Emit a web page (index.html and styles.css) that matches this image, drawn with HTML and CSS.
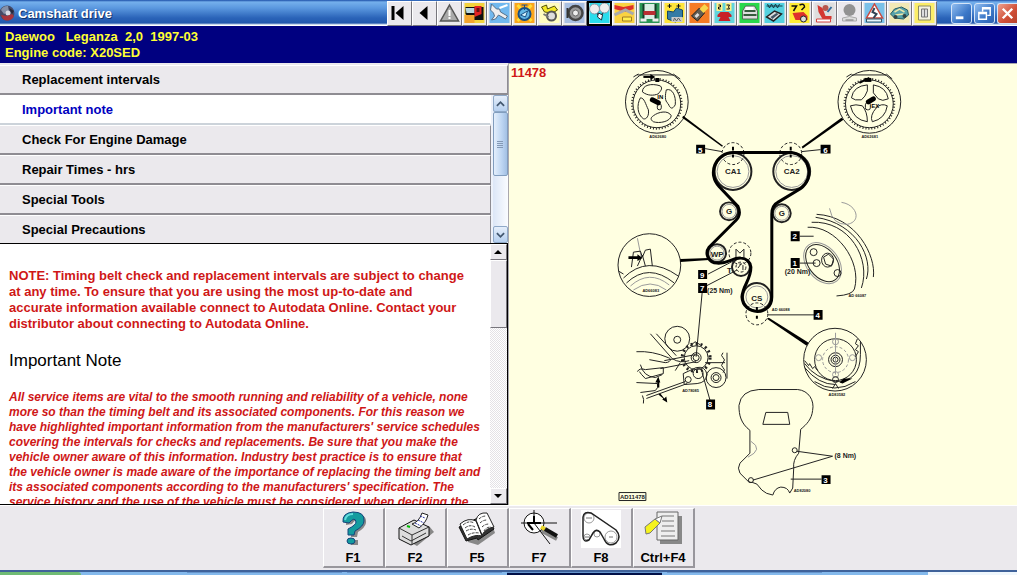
FILE: index.html
```html
<!DOCTYPE html>
<html lang="en">
<head>
<meta charset="utf-8">
<title>Camshaft drive</title>
<link rel="stylesheet" href="styles.css">
</head>
<body>
<div class="app">
  <header class="titlebar">
    <svg class="app-icon" viewBox="0 0 15 16" aria-hidden="true"><circle cx="7" cy="8" r="7.500" fill="#454a66"/><path d="M1 5a7 7 0 0 1 7-4l1 6-5 2z" fill="#8590a8"/><circle cx="8" cy="8" r="2.500" fill="#d9dbe4"/><path d="M1 10l6 1 5-2 2 2a7 7 0 0 1-11 3z" fill="#a8343c"/><path d="M9 3l5 3-2 3z" fill="#27283a"/></svg>
    <h1 class="window-title">Camshaft drive</h1>
    <nav class="tools" aria-label="Modules">
      <button class="tool" aria-label="First"><svg viewBox="0 0 20 20"><path d="M2 3h3v14H2zM14 3v14L6 10z"/></svg></button>
      <button class="tool" aria-label="Previous"><svg viewBox="0 0 20 20"><path d="M13 3v14L5 10z"/></svg></button>
      <button class="tool" aria-label="Warnings"><svg viewBox="0 0 20 20"><path d="M10 2l9 16H1z" fill="#aaa" stroke="#555" stroke-width="1.500"/><path d="M9 7h2v6H9zM9 14h2v2H9z" fill="#fff"/></svg></button>
      <button class="tool" aria-label="Vehicle"><svg viewBox="0 0 20 20"><path fill="#f3d33d" d="M0 0h20v20H0z"/><path d="M1 4h18v13H7l-6-6z" fill="#111"/><path d="M1 5h9v5H2z" fill="#b8d8e0"/><path d="M10 3h7v8l-7 3z" fill="#e32222"/><path d="M0 12h10v8H0z" fill="#f3a52e"/><path d="M12 5h3v4h-3z" fill="#611"/></svg></button>
      <button class="tool" aria-label="Service"><svg viewBox="0 0 20 20"><path fill="#70b8ee" d="M0 0h20v20H0z"/><path d="M2 1l5 5 3 0 1 3 7 4-2 3-7-4-3 4-4 1 3-4-1-3-3-3z" fill="#eee" stroke="#56718a"/><path d="M10 5l8-3" stroke="#fff" stroke-width="2"/></svg></button>
      <button class="tool" aria-label="Timing"><svg viewBox="0 0 20 20"><path fill="#fba51c" d="M0 0h20v20H0z"/><path d="M3 2l14 16M17 2L3 18" stroke="#ffdd37" stroke-width="3"/><circle cx="10" cy="11" r="6" fill="#63b6e4" stroke="#184f84" stroke-width="2"/><path d="M10 2v5M7 2h6M6 12l7-4-2 6z" stroke="#184f84" fill="#d8f4ff"/></svg></button>
      <button class="tool" aria-label="Timing belts"><svg viewBox="0 0 20 20"><path fill="#fffcc0" d="M0 0h20v20H0z"/><path d="M2 4l5-2 1 4 7-3 3 4-5 3-8-1z" fill="#f5ea25" stroke="#53500b"/><circle cx="12" cy="13" r="4.500" fill="#ddd" stroke="#555" stroke-width="2"/><path d="M4 11l5 3" stroke="#777" stroke-width="2"/></svg></button>
      <button class="tool" aria-label="Tyres"><svg viewBox="0 0 20 20"><path fill="#aac0e2" d="M0 0h20v20H0z"/><circle cx="11" cy="10" r="7" fill="#999" stroke="#444" stroke-width="2.500"/><circle cx="11" cy="10" r="3" fill="#eee" stroke="#666"/><path d="M3 5v10" stroke="#333" stroke-width="2"/></svg></button>
      <button class="tool selected" aria-label="Camshaft drive"><svg viewBox="0 0 20 20"><path fill="#29dded" d="M0 0h20v20H0z"/><path d="M4 5l7 10 4-9" stroke="#16424c" fill="none" stroke-width="1.500"/><circle cx="5" cy="6" r="5" fill="#eee" stroke="#89a"/><circle cx="15" cy="5" r="5" fill="#eee" stroke="#89a"/><path d="M9 10l4 2-1 5-4-3z" fill="#fff" stroke="#234"/></svg></button>
      <button class="tool" aria-label="Suspension"><svg viewBox="0 0 20 20"><path fill="#fad342" d="M0 0h20v20H0z"/><path d="M0 2l9 2 10-2v4l-8 3-11-3z" fill="#dd2f2a"/><path d="M0 12l11-5 8 4" stroke="#aaa" fill="none" stroke-width="3"/><path d="M8 14h9v4H8z" fill="#ffee50" stroke="#a07c28"/></svg></button>
      <button class="tool" aria-label="Lifting"><svg viewBox="0 0 20 20"><path fill="#2a9554" d="M0 0h20v20H0z"/><path d="M4 1h12v15H4z" fill="#d8eee3"/><path d="M4 1v17M16 1v17" stroke="#123d28" stroke-width="2"/><path d="M4 8h12v4H4z" fill="#b92f32"/><path d="M1 17h6M13 17h6" stroke="#eee" stroke-width="3"/></svg></button>
      <button class="tool" aria-label="Engine management"><svg viewBox="0 0 20 20"><path fill="#ffe53b" d="M0 0h20v20H0z"/><path d="M3 8l6 1 3-4 6 2v7l-7 5-8-3z" fill="#367ca5" stroke="#174561"/><path d="M5 1v4M3 3h4M14 1v4M12 3h4" stroke="#111"/><path d="M7 14h11v5H7z" fill="#ccc"/><path d="M9 18l1-3 2 3 2-3 2 3" fill="none" stroke="#666"/></svg></button>
      <button class="tool" aria-label="Connectors"><svg viewBox="0 0 20 20"><path fill="#f47b24" d="M0 0h20v20H0z"/><path d="M2 13l8-8 5 5-7 8z" fill="#625d52" stroke="#222"/><path d="M10 6l5-5 4 4-5 5z" fill="#f8d64b"/><path d="M5 13l3-3 2 2-3 3z" fill="#ddd"/></svg></button>
      <button class="tool" aria-label="Fault codes"><svg viewBox="0 0 20 20"><path fill="#62d5dc" d="M0 0h20v20H0z"/><path fill="#fff38a" d="M2 0h6v8H2zM11 0h6v8h-6z"/><path d="M4 2h2v2H4v2h2M12 2h3l-1 2 1 2h-3" stroke="#111" fill="none"/><path d="M3 12l3-3h8l3 3v2h-3l2 4H4l2-4H3z" fill="#c82026"/></svg></button>
      <button class="tool" aria-label="Key programming"><svg viewBox="0 0 20 20"><path fill="#28d84a" d="M0 0h20v20H0z"/><path d="M3 8l3-5h9l3 5v8H3z" fill="#ddd" stroke="#546d59"/><path d="M5 8h11M4 12h13" stroke="#345a3b" stroke-width="2"/><path d="M6 4h8v3H6z" fill="#fff"/></svg></button>
      <button class="tool" aria-label="Air conditioning"><svg viewBox="0 0 20 20"><path fill="#54d1df" d="M0 0h20v20H0z"/><path d="M2 3h16M3 1l2 4 2-4 2 4 2-4 2 4 2-4" stroke="#173b46" fill="none"/><path d="M2 14l8-6 7 3-8 7z" fill="#ddd" stroke="#222" stroke-width="1.500"/><path d="M6 14l6-4 2 1-6 5z" fill="#456"/></svg></button>
      <button class="tool" aria-label="Fault finding"><svg viewBox="0 0 20 20"><path fill="#ffec34" d="M0 0h20v20H0z"/><path d="M2 3h5L4 8M10 2q5-2 5 2l-3 3" stroke="#111" fill="none" stroke-width="1.500"/><path d="M3 10l11-1 4 4v4H6z" fill="#de302c"/><circle cx="14" cy="16" r="3" fill="#ddd" stroke="#222"/></svg></button>
      <button class="tool" aria-label="Airbags"><svg viewBox="0 0 20 20"><path fill="#dedede" d="M0 0h20v20H0z"/><path d="M3 2l5 3 3 8h6v3H8L4 9z" fill="#d43732"/><circle cx="11" cy="5" r="3" fill="#b7584d"/><path d="M13 9l4-5" stroke="#346d9d" stroke-width="2"/><path d="M2 16h14v3H2z" fill="#fff" stroke="#d54340"/></svg></button>
      <button class="tool" aria-label="Anti-lock brakes"><svg viewBox="0 0 20 20"><circle cx="10" cy="7" r="6" fill="#929292"/><path d="M3 15q7-3 14 0v3H3z" fill="#ddd" stroke="#aaa"/><path d="M6 17h8" stroke="#777"/></svg></button>
      <button class="tool" aria-label="Advice"><svg viewBox="0 0 20 20"><path fill="#7ac1e8" d="M0 0h20v20H0z"/><path d="M10 1l8 14H2z" fill="#fff" stroke="#cb493e" stroke-width="1.500"/><path d="M10 5l-2 4 4 2-3 4" stroke="#345" fill="none" stroke-width="2"/><path d="M2 16h15v3H2z" fill="#e5f7fb" stroke="#356"/></svg></button>
      <button class="tool" aria-label="Electrical"><svg viewBox="0 0 20 20"><path fill="#f1e9b6" d="M0 0h20v20H0z"/><path d="M1 11l4-5 7-2 6 3 1 5-5 4-9-1z" fill="#56a2aa" stroke="#295d64"/><path d="M5 9l5-3 5 3M6 12l8-1" stroke="#ece7aa" fill="none" stroke-width="1.500"/><circle cx="6" cy="14" r="2" fill="#344"/><circle cx="15" cy="13" r="2" fill="#344"/></svg></button>
      <button class="tool" aria-label="Fuses"><svg viewBox="0 0 20 20"><path fill="#fbed68" d="M0 0h20v20H0z"/><path d="M4 3h12v14H4z" fill="#f4f2df" stroke="#8d8b66"/><path d="M7 6h6v8H7zM10 6v8" stroke="#777" fill="#ddd"/></svg></button>
    </nav>
    <div class="window-controls">
      <button class="winbtn" aria-label="Minimise"><svg viewBox="0 0 20 20"><path fill="#fff" d="M4 13h8v3H4z"/></svg></button>
      <button class="winbtn" aria-label="Restore"><svg viewBox="0 0 20 20"><path d="M8 8V4h8v8h-3M4 9h8v7H4zM4 10h8M8 5h8" stroke="#fff" fill="none" stroke-width="1.500"/></svg></button>
      <button class="winbtn close" aria-label="Close"><svg viewBox="0 0 20 20"><path d="M5 5l10 10M15 5L5 15" stroke="#fff" stroke-width="2.500"/></svg></button>
    </div>
  </header>

  <section class="vehicle">
    <p>Daewoo &nbsp; Leganza &nbsp;2,0 &nbsp;1997-03</p>
    <p>Engine code: X20SED</p>
  </section>

  <main class="content">
    <section class="left">
      <button class="item">Replacement intervals</button>
      <div class="sections">
        <div class="section-list">
          <button class="item active">Important note</button>
          <button class="item">Check For Engine Damage</button>
          <button class="item">Repair Times - hrs</button>
          <button class="item">Special Tools</button>
          <button class="item">Special Precautions</button>
        </div>
        <div class="xp-scroll">
          <button class="xp-arrow" aria-label="Scroll sections up"><svg viewBox="0 0 10 10"><path d="M1 7l4-4 4 4" fill="none" stroke="#42576f" stroke-width="2"/></svg></button>
          <div class="xp-thumb"><svg viewBox="0 0 8 9"><path d="M1 1.500h6M1 3.500h6M1 5.500h6M1 7.500h6" stroke="#8499b5"/></svg></div>
          <button class="xp-arrow xp-down" aria-label="Scroll sections down"><svg viewBox="0 0 10 10"><path d="M1 3l4 4 4-4" fill="none" stroke="#42576f" stroke-width="2"/></svg></button>
        </div>
      </div>
      <div class="reader">
        <article class="article">
          <p class="notice">NOTE: Timing belt check and replacement intervals are subject to change<br>at any time. To ensure that you are using the most up-to-date and<br>accurate information available connect to Autodata Online. Contact your<br>distributor about connecting to Autodata Online.</p>
          <h2>Important Note</h2>
          <p class="advice">All service items are vital to the smooth running and reliability of a vehicle, none<br>more so than the timing belt and its associated components. For this reason we<br>have highlighted important information from the manufacturers' service schedules<br>covering the intervals for checks and replacements. Be sure that you make the<br>vehicle owner aware of this information. Industry best practice is to ensure that<br>the vehicle owner is made aware of the importance of replacing the timing belt and<br>its associated components according to the manufacturers' specification. The<br>service history and the use of the vehicle must be considered when deciding the</p>
        </article>
        <div class="scroll">
          <button class="arrow" aria-label="Scroll text up"><svg viewBox="0 0 8 8"><path d="M0 6h8L4 2z"/></svg></button>
          <div class="thumb"></div>
          <button class="arrow arrow-down" aria-label="Scroll text down"><svg viewBox="0 0 8 8"><path d="M0 2h8L4 6z"/></svg></button>
        </div>
      </div>
    </section>

    <section class="diagram">
      <svg class="drawing" viewBox="509 64 508 443" preserveAspectRatio="xMinYMin meet" role="img" aria-label="Timing belt layout">
        <text x="511" y="77" class="number">11478</text>

        <!-- Intake sprocket detail -->
        <g class="line">
          <circle cx="657.500" cy="102" r="31.500"/>
          <circle cx="657.500" cy="104" r="24"/>
          <circle cx="657.500" cy="104" r="25" class="teeth"/>
          <path d="M638 75h36M634 77l5-3M674 74l7 5"/>
          <path d="M643 92c0-7 9-9 18-6 3 3 0 5-2 8-5 2-11 2-16-2zM667 90c6-2 10 6 9 15-3 5-5 4-7-1-4-3-3-9-2-14zM641 98c4 0 5 6 8 12 1 6-2 10-5 9-6-4-7-14-3-21zM654 116c5-4 15-6 18 0-1 6-12 8-18 6-3-2-3-4 0-6z"/>
          <rect x="658" y="104" width="4" height="6" rx="2"/>
        </g>
        <path class="bold4" d="M653 100l6 3"/><path class="thick" d="M644 77h10"/><path d="M651 74l5 3-5 3zM656 78h4v4h-4z"/>
        <path d="M684 116l40 30-1 1-40-29z"/>
        <text x="658" y="99" class="tiny6">IN</text><text x="650" y="138" class="tiny">AD62680</text>

        <!-- Exhaust sprocket detail -->
        <g class="line">
          <circle cx="871" cy="102" r="31.500"/>
          <circle cx="871" cy="104" r="24"/>
          <circle cx="871" cy="104" r="25" class="teeth"/>
          <path d="M853 75h35M848 77l5-3M888 74l6 5"/>
          <path d="M853 98q2-12 16-13v6q-2 6-6 9-7 1-10-2zM875 85q13 2 15 14-6 3-10 0l-5-6zM852 106q5-2 12 0 5 6 5 16-14-2-17-16zM889 106q-2 13-15 16-3-6 4-14 5-5 11-2z"/>
          <rect x="867" y="103" width="5" height="7" rx="2"/>
        </g>
        <path class="bold4" d="M870 102l5-3"/><path class="thick" d="M861 83l10-5"/><path d="M866 78h7v4h-7z"/>
        <path d="M843 118l-40 29 1 2 41-29z"/>
        <text x="873" y="108" class="tiny6">EX</text><text x="863" y="138" class="tiny">AD62681</text>

        <!-- Pulleys -->
        <g class="line">
          <g class="rim"><circle cx="734" cy="172" r="18.500"/><circle cx="793" cy="172" r="18.500"/><circle cx="730" cy="212" r="9"/><circle cx="783" cy="214" r="9"/><circle cx="718" cy="254" r="9"/><circle cx="742" cy="268" r="9"/><circle cx="758" cy="298" r="14"/></g>
          <g class="faint"><circle cx="734" cy="172" r="16"/><circle cx="793" cy="172" r="16"/><circle cx="730" cy="212" r="7"/><circle cx="783" cy="214" r="7"/><circle cx="718" cy="254" r="7"/><circle cx="758" cy="298" r="11"/></g>
          <g class="dashed"><circle cx="734" cy="154" r="11"/><circle cx="792" cy="154" r="11"/><circle cx="741" cy="254" r="11"/><circle cx="758" cy="315" r="11"/><circle cx="742" cy="268" r="5"/></g>
          <path d="M737 258v-8l4 4 4-4v8M739 269l3-4M744 266v5"/>
        </g>
        <path class="belt" d="M734 153H793A20 20 0 0 1 802 189L779 203Q773 206 773 215V298C773 318 744 317 743 298C744 286 752 281 752 268A10 10 0 0 0 742 259C734 258 729 265 718 264A10 10 0 0 1 710 248L736 222Q743 216 739 207L720 187A20 20 0 0 1 734 153Z"/>
        <path d="M733 147h2v4h-2zM733 155h2v3h-2zM791 147h2v4h-2zM791 155h2v3h-2zM757 308h2v4h-2zM757 317h2v3h-2z"/>
        <text x="734" y="175" class="label mid">CA1</text><text x="793" y="175" class="label mid">CA2</text>
        <text x="730" y="215" class="label mid">G</text><text x="783" y="217" class="label mid">G</text>
        <text x="718" y="258" class="label mid">WP</text><text x="728" y="274" class="label">T</text><text x="758" y="302" class="label mid">CS</text>

        <!-- Water pump alignment detail -->
        <g class="line">
          <circle cx="650" cy="266" r="31.500"/>
          <path d="M624 279q24-24 55-2M627 284q22-21 48 0M619 272l5 3"/><path class="faint" d="M631 287q19-17 39-1M634 291q17-12 33 0M638 239l4 20"/>
          <path d="M632 268l2-15 7-1 2 6 3-7 5-1 2 17M638 267l5-11 3 11"/>
        </g>
        <path d="M629 257h9v-2l5 4-5 3v-2h-9zM681 260l29-1v2l-29 2z"/>
        <text x="643" y="293" class="tiny">AD66083</text>

        <!-- Crankshaft pulley -->
        <g class="line">
          <path d="M809 228c28-2 55 34 47 62q-2 6-18 7M813 223c38-2 60 37 50 66M817 218c42 6 58 42 51 62M818 215c40 2 60 42 57 63"/>
          <path class="faint" d="M831 209q3 17 18 16c15-3 9-20-6-22"/>
          <ellipse cx="824" cy="264" rx="21" ry="14" transform="rotate(52 824 264)"/><ellipse class="faint" cx="824" cy="264" rx="23" ry="16" transform="rotate(52 824 264)"/>
          <circle cx="815" cy="253" r="3.500"/><circle cx="818" cy="264" r="3.500"/><circle cx="839" cy="274" r="3.500"/>
          <ellipse cx="829" cy="261" rx="6" ry="7"/><path d="M825 258l5-3 5 5-2 7-6-2z"/>
        </g>
        <text x="850" y="298" class="tiny">AD 66087</text>

        <!-- Tensioner adjustment -->
        <g class="line">
          <circle cx="678" cy="340" r="12.500"/><circle cx="678" cy="341" r="3.500"/>
          <path d="M651 335l22 25q8 5 17 2M657 335l20 22"/>
          <circle cx="697" cy="359" r="12"/><circle cx="697" cy="359" r="14" class="teeth wide"/><circle cx="697" cy="359" r="5"/><circle cx="697" cy="359" r="3"/>
          <circle cx="717" cy="379" r="10"/><circle cx="717" cy="379" r="5"/><circle cx="717" cy="379" r="3"/>
          <path d="M728 354v26M724 354q-3 3 0 5t0 5 0 5 0 5M706 364h20"/>
          <path d="M696 356l-31 6M697 363l-36 7M676 372l5-8M684 375l13-6q9-2 11 7-1 8-10 9l-13 1z"/>
          <circle cx="699" cy="375" r="5"/><circle cx="689" cy="381" r="3"/>
          <path d="M637 353q16-1 32 6c4 1 2 5-3 5l-16-3M638 373q2-4 8-2l18-2v6l-18 5q-5-5-6-7M637 384l21 1q2 4-2 7l-15 2M647 397l39-14M647 400l41-15M641 366q3 12 15 13l7-3M643 397q2 4 1 8M691 347l5-4 5 3"/>
        </g>
        <path d="M659 378l2 6h-1v5h-2v-5h-2zM661 395l4 5 2-2 1 6-5-3 1-1-5-4z"/>
        <text x="683" y="393" class="tiny">AD78085</text>

        <!-- Crankshaft mark detail -->
        <g class="line">
          <circle cx="836.500" cy="361" r="31.500"/><path d="M806 365q11 15 31 18 25 0 25-27v-13M806 369q14 17 31 17"/>
          <circle cx="837" cy="361" r="21"/><circle class="faint dashed" cx="837" cy="361" r="13"/>
          <circle cx="837" cy="361" r="7"/><circle cx="837" cy="361" r="4.500"/><circle cx="837" cy="361" r="2.500"/>
          <g class="faint"><circle cx="837" cy="343" r="3"/><circle cx="820" cy="359" r="3"/><circle cx="854" cy="359" r="3"/><circle cx="837" cy="376" r="3"/><path d="M837 334v42"/></g>
          <path d="M806 362l4 5 1-2 3 5 2-2 3 4M859 340l-2 5 3 2-3 4 3 2-3 5M816 383q20 13 41 0M834 390l3-5 3 5"/><circle cx="837" cy="381" r="3"/>
        </g>
        <path d="M841 384l4-4 9 0-10 5z"/><path d="M770 319l40 25-2 3-40-27z"/>
        <text x="830" y="398" class="tiny">AD83582</text><text x="773" y="312" class="tiny">AD 66088</text>

        <!-- Belt cover -->
        <g class="line">
          <path d="M760 391H799C810 392 816 402 814 412C813 421 808 426 802 431L800 455Q794 462 795 470L794 490L791 495Q789 489 782 489Q776 490 774 497Q767 496 763 492L758 486Q754 484 750 484L741 475Q738 470 741 465L751 455V432C742 425 740 417 740 407Q742 392 760 391Z"/>
          <path d="M767 414h22l2 12h-27z"/><circle cx="796" cy="452" r="2.500"/><circle cx="752" cy="482" r="2.500"/><path class="faint" d="M752 443q13 8-3 16"/>
          <path d="M798 453l36 5-80 24M792 481h31"/>
        </g>
        <text x="795" y="494" class="tiny">AD82080</text><text x="836" y="460" class="torque">(8 Nm)</text>

        <!-- Callouts -->
        <g class="line"><path d="M706 149l17 3M822 150l-19 2M801 237h14M801 264h16M709 275l27-14M707 287l31-16M703 294l-6 64M703 374l8 28M769 316h47"/></g>
        <path d="M697 145h9v9h-9zM822 145h10v9h-10zM792 232h9v10h-9zM792 259h9v10h-9zM699 271h9v9h-9zM699 284h9v10h-9zM815 311h9v10h-9zM707 401h9v10h-9zM823 477h9v9h-9z"/>
        <g class="callout"><text x="701" y="153">5</text><text x="827" y="153">6</text><text x="796" y="240">2</text><text x="796" y="267">1</text><text x="703" y="279">9</text><text x="703" y="292">7</text><text x="819" y="319">4</text><text x="711" y="409">8</text><text x="827" y="485">3</text></g>
        <text x="786" y="275" class="torque">(20 Nm)</text><text x="708" y="294" class="torque">(25 Nm)</text>
        <path class="line" d="M619.500 494.500h27v8h-27z"/><text x="633" y="501" class="plate mid">AD11478</text>
      </svg>
    </section>
  </main>

  <footer class="actions">
    <button class="action"><svg viewBox="0 0 40 38"><path d="M13 15q-1-9 9-11 12 0 11 9-1 5-8 9l-1 5h-6v-7q7-4 8-8-2-5-7 2zM18 30h7v5h-7z" fill="#888"/><path d="M10 12Q9 3 20 2q12 0 11 9 0 5-9 10l-1 4h-6v-6q8-4 8-7-1-6-7 1z" fill="#149c9f" stroke="#14447c"/><ellipse cx="18" cy="31" rx="4" ry="3" fill="#149c9f" stroke="#14447c"/><path d="M12 10q1-6 8-6" stroke="#63dbdc" stroke-width="2" fill="none"/></svg>F1</button>
    <button class="action"><svg viewBox="0 0 40 38"><path d="M8 28l14 8 17-14-5-6-22 8z" fill="#888"/><path d="M4 18l15-8 15 7v9l-18 9-12-6z" fill="#ddd" stroke="#111"/><path d="M4 18l13 7 17-8M17 25v9M7 26l9 5 15-8" stroke="#333" fill="none"/><path d="M17 14q7-2 10-11l6 2q-2 8-9 13z" fill="#fff" stroke="#222"/><path d="M20 13l6 3M23 10l6 3M25 6l5 2" stroke="#2732a0" stroke-dasharray="2 1"/><path d="M12 16l3 1" stroke="#0b0" stroke-width="2"/></svg>F2</button>
    <button class="action"><svg viewBox="0 0 40 38"><path d="M11 32l10 3 17-12-2-6-25 11z" fill="#888"/><path d="M2 17l7 14 11-3 1 2 16-11-8-15z" fill="#333" stroke="#111"/><path d="M3 14q8-7 16-3l6 15q-7-2-15 3zM19 10q2-8 11-7l7 14q-8 1-12 8z" fill="#fff" stroke="#222"/><path d="M6 15q6-5 11-2M8 18q5-4 10-1M9 21q5-3 10-1M11 25q5-3 11-2M22 9q3-3 7-3M23 13q3-3 7-3M25 17q3-3 7-3M27 21q2-4 7-4" stroke="#444" fill="none" stroke-dasharray="3 1"/></svg>F5</button>
    <button class="action"><svg viewBox="0 0 40 38"><path d="M23 21l15 8M22 19l14 8" stroke="#888" stroke-width="4"/><circle cx="15" cy="13" r="10" fill="#fff" stroke="#111"/><path d="M2 13h36M15 0v14M15 13l16 21" stroke="#111"/><path d="M8 13h14M15 6v7M9 14l5 6" stroke="#000" stroke-width="2"/><path d="M22 17l4 2" stroke="#e8d629" stroke-width="4"/><path d="M26 19l12 7" stroke="#111" stroke-width="4"/></svg>F7</button>
    <button class="action"><svg viewBox="0 0 40 38"><path fill="#fff" d="M0 0h40v38H0z"/><circle cx="8" cy="8" r="5" stroke="#999" fill="none"/><circle cx="30" cy="27" r="6" stroke="#999" fill="none"/><circle cx="16" cy="24" r="3" stroke="#999" fill="none"/><circle cx="6" cy="27" r="3" stroke="#999" fill="none"/><path d="M2 7q1-6 8-4l25 17q6 7 0 13-8 5-12-4l-4-7q-4-4-7 1l-4 7q-6 3-6-4z" fill="none" stroke="#222" stroke-width="1.500"/><path d="M5 8h6M4 27h4M28 27h4" stroke="#777"/></svg>F8</button>
    <button class="action"><svg viewBox="0 0 40 38"><path d="M17 6h22v28H17z" fill="#888"/><path d="M14 2h21v28H14z" fill="#eee" stroke="#666"/><path d="M19 6h12M19 11h12M19 16h12M18 21h14M18 26h14" stroke="#777"/><path d="M2 17l10-8 5 4-10 10-4 1z" fill="#f5f31d" stroke="#777"/><path d="M12 9l7-3-2 7z" fill="#fff" stroke="#777"/></svg>Ctrl+F4</button>
  </footer>
  <div class="taskbar"><span class="start"></span><span class="task"></span><span class="task"></span><span class="task current"></span><span class="task"></span><span class="tray"></span></div>
</div>
</body>
</html>
```
FILE: styles.css
```css
* { box-sizing: border-box; }
body { margin: 0; font-family: "Liberation Sans", Arial, sans-serif; font-size: 13px; font-weight: bold; color: #000; background: #ebe9ed; }
button { font: inherit; color: inherit; padding: 0; margin: 0; }
p, h1, h2 { margin: 0; }
.app { height: 100vh; display: flex; flex-direction: column; overflow: hidden; }

.titlebar { flex: 0 0 26px; display: flex; align-items: center; background: linear-gradient(#1c4fa8, #75b0ec 2px, #5b98df 8px, #2a63b8 18px, #2258ad 23px, #fff 25px); }
.app-icon { width: 15px; height: 16px; }
.window-title { flex: 1; padding-left: 3px; font-size: 13px; color: #fff; text-shadow: 1px 1px #12326c; white-space: nowrap; }
.tools { display: flex; height: 25px; background: #d8d5dc; }
.tool { width: 25px; height: 25px; display: grid; place-items: center; background: #ebe9ed; border: 1px solid; border-color: #fff #77757c #77757c #fff; }
.tool svg { width: 21px; height: 20px; }
.tool.selected { border: 2px solid #000; }
.window-controls { display: flex; gap: 2px; padding-left: 14px; }
.winbtn { width: 21px; height: 21px; display: grid; place-items: center; border: 1px solid #d4e4f8; border-radius: 3px; background: linear-gradient(135deg, #91bdf0, #3c78c8 60%, #2a5fae); }
.winbtn svg { width: 19px; height: 19px; }
.winbtn.close { width: 20px; border-right: 0; border-radius: 3px 0 0 3px; background: linear-gradient(135deg, #eda08e, #cf4e36 60%, #b5432d); }

.vehicle { flex: 0 0 37px; padding: 3px 5px 0; background: #000080; color: #ff3; font-size: 13px; line-height: 16px; white-space: nowrap; }

.content { flex: 1; min-height: 0; display: grid; grid-template-columns: 1fr 1fr; }
.left { min-width: 0; min-height: 0; display: flex; flex-direction: column; padding-top: 2px; border-right: 1px solid #aaa8ae; }
.item { flex: 0 0 30px; width: 100%; padding-left: 22px; text-align: left; font-size: 13px; background: #ebe9ed; border: solid; border-width: 1px 1px 2px 0; border-color: #fff #8e8c92 #8e8c92; }
.item.active { background: #fff; color: #0000c0; border-color: #fff #fff #ccd3da; }
.sections { flex: 0 0 148px; display: flex; overflow: hidden; }
.section-list { flex: 1; display: flex; flex-direction: column; }
.xp-scroll { flex: 0 0 17px; display: flex; flex-direction: column; background: linear-gradient(90deg, #dce6f6, #fafcff); border-left: 2px solid #eef2fa; }
.xp-arrow { width: 15px; height: 17px; display: grid; place-items: center; border: 1px solid #8fa9c8; border-radius: 2px; background: linear-gradient(#e6effb, #b5cfef); }
.xp-arrow svg { width: 9px; height: 10px; }
.xp-thumb { width: 15px; height: 64px; display: grid; place-items: center; border: 1px solid #819dbe; border-radius: 2px; background: linear-gradient(90deg, #e4effc, #bdd5f2 60%, #a3c0e4); }
.xp-thumb svg { width: 8px; height: 9px; }
.xp-down { margin-top: auto; }

.reader { flex: 1; min-height: 0; display: flex; background: #fff; border: solid #000; border-width: 1px 1px 1px 0; }
.article { flex: 1; min-width: 0; padding: 24px 0 0 9px; overflow: hidden; white-space: nowrap; color: #cf1717; }
.notice { font-size: 13px; line-height: 16px; }
.article h2 { margin: 20px 0; font-size: 17px; line-height: 18px; font-weight: normal; color: #000; }
.advice { font-size: 12px; line-height: 15px; font-style: italic; }
.scroll { flex: 0 0 17px; display: flex; flex-direction: column; background: repeating-conic-gradient(#fff 0 25%, #e4e2e6 0 50%) 0 0 / 2px 2px; }
.arrow { flex: 0 0 16px; display: grid; place-items: center; background: #ebe9ed; border: 1px solid; border-color: #fff #77757c #77757c #fff; }
.arrow svg { width: 8px; height: 8px; }
.arrow-down { margin-top: auto; }
.thumb { height: 68px; background: #ebe9ed; border: 1px solid; border-color: #fff #77757c #77757c #fff; }

.diagram { min-width: 0; min-height: 0; background: #ffffe1; border-top: 1px solid #aaa8ae; }
.drawing { display: block; width: 100%; height: 100%; }
.line { fill: none; stroke: #222; stroke-width: 1; }
.rim { stroke-width: 2; }
.faint { stroke: #999; fill: none; }
.teeth { stroke-width: 2; stroke-dasharray: 1 2; fill: none; }
.wide { stroke-width: 3; stroke-dasharray: 2 3; }
.dashed { stroke-dasharray: 3 2; fill: none; }
.belt { fill: none; stroke: #000; stroke-width: 3; }
.thick { stroke: #000; stroke-width: 2; }
.bold4 { stroke: #000; stroke-width: 5; stroke-linecap: round; }
.number { font-size: 13px; fill: #cf1717; }
.label { font-size: 8px; fill: #222; }
.tiny { font-size: 4px; fill: #222; }
.tiny6 { font-size: 6px; }
.torque { font-size: 7px; fill: #222; }
.plate { font-size: 6px; fill: #222; }
.mid, .callout { text-anchor: middle; }
.callout { font-size: 8px; fill: #fff; }

.actions { flex: 0 0 63px; display: flex; justify-content: center; padding: 2px 0; border-top: 1px solid #fff; }
.action { width: 62px; display: flex; flex-direction: column; align-items: center; gap: 2px; padding-top: 1px; line-height: 16px; background: #ebe9ed; border: solid; border-width: 1px 2px 2px 1px; border-color: #fff #98969c #98969c #fff; }
.action svg { width: 40px; height: 38px; }

.taskbar { flex: 0 0 5px; display: flex; border-top: 2px solid #3f629a; background: #84b9ec; }
.start { flex: 0 0 8%; margin-right: 106px; background: #6fbb74; border-radius: 0 3px 0 0; }
.task { flex: 0 0 155px; margin-right: 5px; border-top: 1px solid #6695cc; }
.task.current { background: #001048; }
.tray { flex: 0 0 89px; margin-left: auto; background: #eff7fd; }
```
